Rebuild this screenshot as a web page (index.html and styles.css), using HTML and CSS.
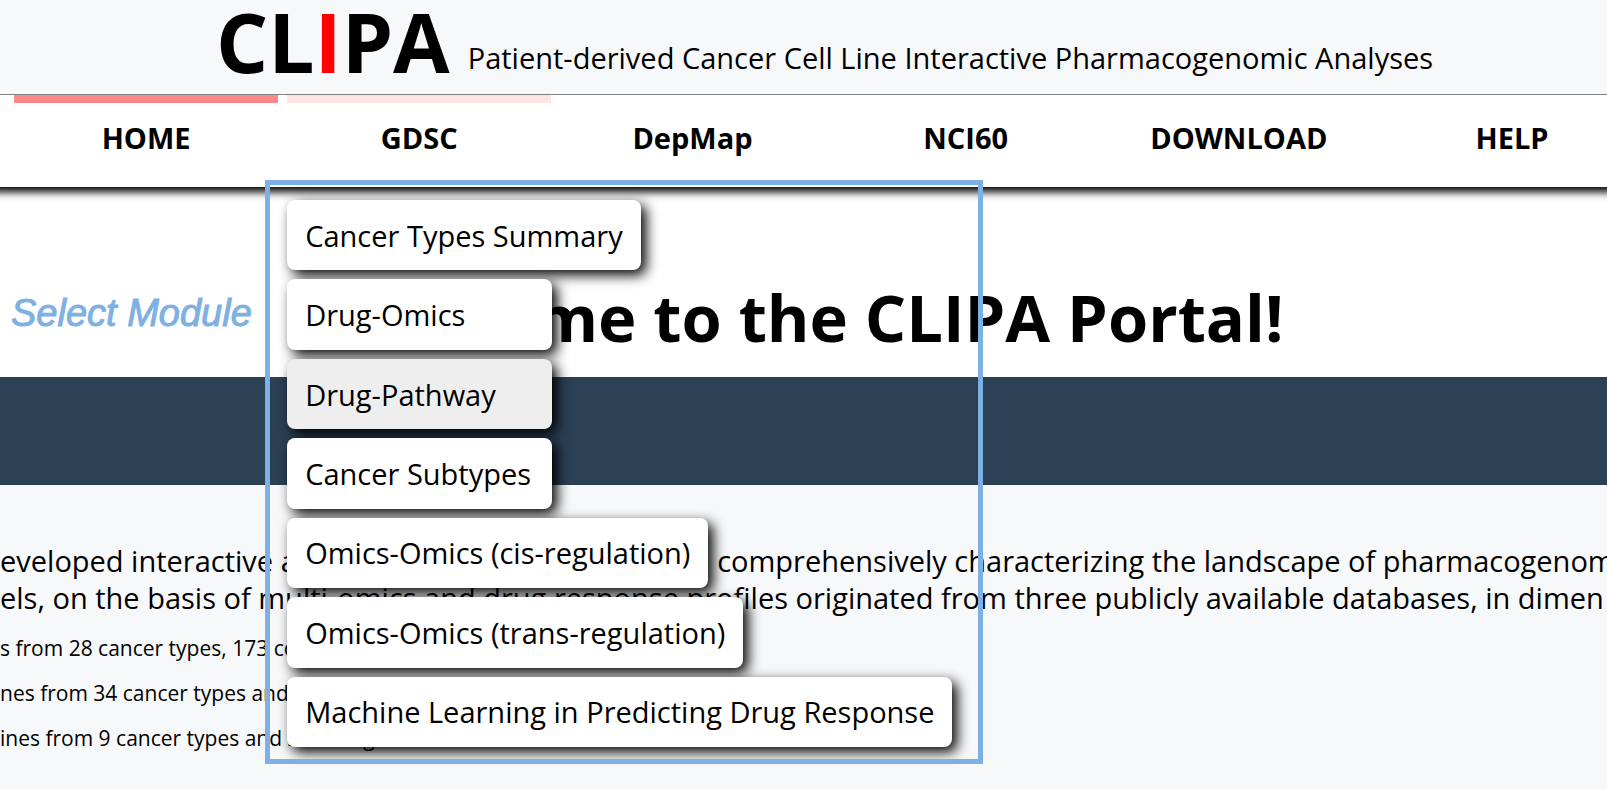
FILE: index.html
```html
<!DOCTYPE html>
<html lang="en">
<head>
<meta charset="utf-8">
<title>CLIPA</title>
<link rel="stylesheet" href="styles.css">
</head>
<body>
<header class="masthead">
  <span class="logo">CL<span class="logo-accent">I</span>PA</span>
  <span class="tagline">Patient-derived Cancer Cell Line Interactive Pharmacogenomic Analyses</span>
</header>
<nav class="nav">
  <div class="nav-item"><a class="nav-link is-active" href="#home">HOME</a></div>
  <div class="nav-item">
    <a class="nav-link is-open" href="#gdsc">GDSC</a>
    <div class="menu">
      <a class="menu-link" href="#summary">Cancer Types Summary</a>
      <a class="menu-link" href="#drug-omics">Drug-Omics</a>
      <a class="menu-link is-hover" href="#drug-pathway">Drug-Pathway</a>
      <a class="menu-link" href="#subtypes">Cancer Subtypes</a>
      <a class="menu-link" href="#cis">Omics-Omics (cis-regulation)</a>
      <a class="menu-link" href="#trans">Omics-Omics (trans-regulation)</a>
      <a class="menu-link" href="#ml">Machine Learning in Predicting Drug Response</a>
    </div>
    <div class="frame"></div>
  </div>
  <div class="nav-item"><a class="nav-link" href="#depmap">DepMap</a></div>
  <div class="nav-item"><a class="nav-link" href="#nci60">NCI60</a></div>
  <div class="nav-item"><a class="nav-link" href="#download">DOWNLOAD</a></div>
  <div class="nav-item"><a class="nav-link" href="#help">HELP</a></div>
</nav>
<main>
  <section class="hero">
    <span class="callout">Select Module</span>
    <h1 class="title">Welcome to the CLIPA Portal!</h1>
  </section>
  <div class="band"></div>
  <section class="intro">
    <p class="lead"><span class="lead-start">eveloped interactive analytical web portal for</span>comprehensively characterizing the landscape of pharmacogenom<br>els, on the basis of multi-omics and drug response profiles originated from three publicly available databases, in dimen</p>
    <ul class="facts">
      <li>s from 28 cancer types, 173 compounds</li>
      <li>nes from 34 cancer types and drugs</li>
      <li>ines from 9 cancer types and 218 drugs</li>
    </ul>
  </section>
</main>
</body>
</html>
```
FILE: styles.css
```css
* { box-sizing: border-box; }
body {
  margin: 0;
  min-height: 100vh;
  overflow: hidden;
  background: #f7f8fa;
  color: #000;
  font-family: "Open Sans", "Noto Sans", sans-serif;
  font-size: 29px;
}
a { color: inherit; text-decoration: none; }
.masthead {
  display: flex;
  justify-content: center;
  align-items: flex-end;
  gap: 18px;
  height: 95px;
  padding-left: 42px;
  border-bottom: 1px solid #808080;
  white-space: nowrap;
}
.logo {
  padding-bottom: 11px;
  font-size: 82px;
  font-weight: 700;
  line-height: 84px;
}
.logo-accent { color: #f00; }
.tagline { padding-bottom: 16px; line-height: 40px; }
.nav {
  position: relative;
  z-index: 1;
  display: grid;
  grid-template-columns: repeat(6, 17vw);
  height: 92px;
  padding-left: 14px;
  background: #fff;
  box-shadow: 0 -3px 8px 8px #000;
  clip-path: inset(0 0 -800px 0);
}
.nav-item { position: relative; padding-right: 9px; }
.nav-link {
  display: flex;
  justify-content: center;
  align-items: center;
  height: 76px;
  border-top: 8px solid transparent;
  font-weight: 700;
}
.nav-link.is-active { border-top-color: #ff8888; }
.nav-link.is-open { border-top-color: #ffe4e6; }
.menu {
  position: absolute;
  top: 105px;
  left: 0;
  display: grid;
  grid-auto-rows: 1fr;
  justify-items: start;
  gap: 9px;
  height: 547px;
}
.menu-link {
  display: flex;
  align-items: center;
  min-width: 265px;
  padding: 0 18px;
  border-radius: 8px;
  background: #fff;
  box-shadow: 5px 5px 13px #000;
  white-space: nowrap;
}
.menu-link.is-hover { background: #eee; }
.frame {
  position: absolute;
  top: 85px;
  left: -22px;
  width: 718px;
  height: 584px;
  border: 5px solid #7eb0e4;
}
.hero {
  position: relative;
  padding: 106px 0 36px;
  background: #fff;
}
.callout {
  position: absolute;
  top: 106px;
  left: 11px;
  color: #7eb0e4;
  font-family: "Liberation Sans", Arial, sans-serif;
  font-size: 38px;
  font-style: italic;
  line-height: 40px;
  -webkit-text-stroke: 1px #7eb0e4;
}
.title {
  margin: 0;
  padding-left: 16px;
  font-size: 65px;
  line-height: 48px;
  text-align: center;
}
.band { height: 108px; background: #2b3f55; }
.intro { padding-top: 57px; white-space: nowrap; }
.lead { margin: 0; line-height: 37px; }
.lead-start { display: inline-block; width: calc(45vw - 6px); }
.facts {
  margin: 10px 0 0;
  padding: 0;
  list-style: none;
  font-size: 21px;
  line-height: 45px;
}
```
